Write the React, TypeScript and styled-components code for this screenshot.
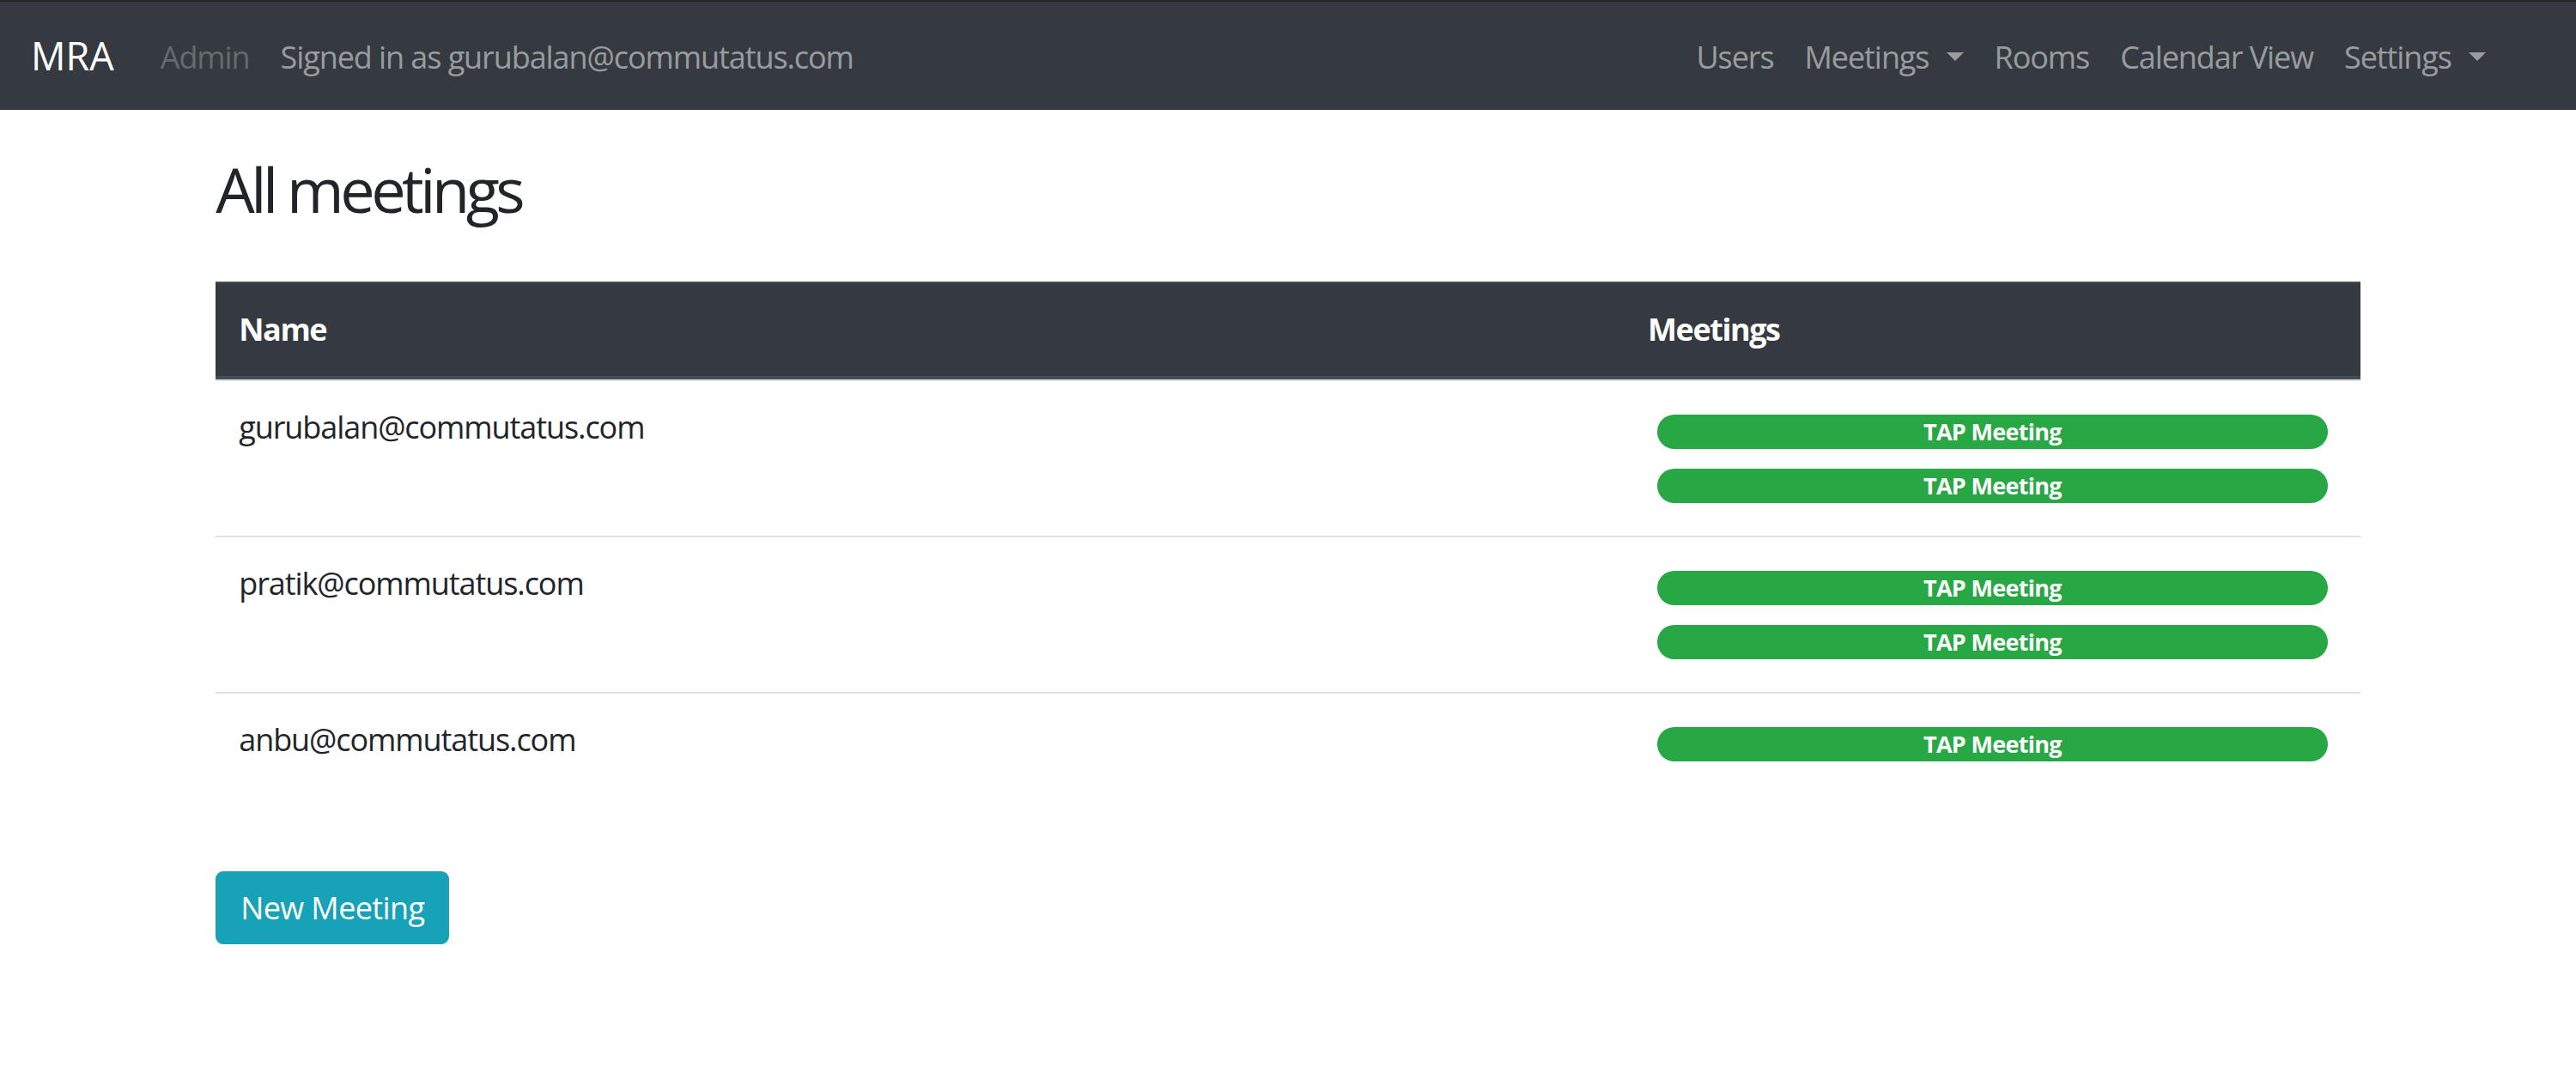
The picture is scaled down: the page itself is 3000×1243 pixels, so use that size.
import React from "react";
import styled, { createGlobalStyle } from "styled-components";

const GlobalStyle = createGlobalStyle`
  *, *::before, *::after { box-sizing: border-box; }
  html { font-size: 36px; }
  body {
    margin: 0;
    font-family: "Segoe UI", "Open Sans", "Noto Sans", sans-serif;
    font-size: 1rem;
    line-height: 1.5;
    letter-spacing: -0.03em;
    color: #212529;
    background: #fff;
  }
`;

const Navbar = styled.nav`
  display: flex;
  align-items: center;
  background: #343a40;
  border-top: 2px solid #232629;
  padding: 0.5rem 87px 0.5rem 1rem;
`;

const Brand = styled.a`
  font-size: 1.25rem;
  line-height: 1.5;
  letter-spacing: 0;
  padding: 0.3125rem 0;
  margin-right: 1rem;
  color: #fff;
  text-decoration: none;
  white-space: nowrap;
`;

const NavList = styled.ul<{ $right?: boolean }>`
  display: flex;
  align-items: center;
  list-style: none;
  margin: 0;
  padding: 0;
  margin-left: ${(p) => (p.$right ? "auto" : "0")};
`;

const NavLink = styled.a<{ $tone?: "muted" | "disabled"; $dropdown?: boolean }>`
  display: block;
  padding: 0.5rem;
  padding-top: calc(0.5rem + 2px);
  padding-bottom: calc(0.5rem - 2px);
  white-space: nowrap;
  text-decoration: none;
  color: ${(p) => (p.$tone === "disabled" ? "rgba(255,255,255,0.25)" : "rgba(255,255,255,0.5)")};
  &::after {
    content: ${(p) => (p.$dropdown ? '""' : "none")};
    display: inline-block;
    margin-left: 0.56em;
    vertical-align: 0.255em;
    border-top: 0.3em solid;
    border-right: 0.3em solid transparent;
    border-left: 0.3em solid transparent;
    border-bottom: 0;
  }
`;

const Container = styled.main`
  max-width: 2565px;
  margin: 0 auto;
  padding: 0 33.75px;
`;

const Title = styled.h2`
  font-size: 2rem;
  font-weight: 400;
  letter-spacing: -0.062em;
  line-height: 1.2;
  margin: 49px 0 65px;
`;

const Table = styled.table`
  width: 100%;
  border-collapse: separate;
  border-spacing: 0;
  margin-bottom: 1rem;
`;

const HeadCell = styled.th<{ $w?: string }>`
  width: ${(p) => p.$w || "auto"};
  text-align: left;
  vertical-align: bottom;
  font-weight: 700;
  letter-spacing: -0.04em;
  color: #fff;
  background: #343a40;
  padding: 0.75rem;
  border-top: 2px solid #454d55;
  border-bottom: 4px solid #454d55;
`;

const Cell = styled.td`
  vertical-align: top;
  padding: 0.75rem;
  border-top: 2px solid #dee2e6;
`;

const BadgeStack = styled.div`
  display: flex;
  flex-direction: column;
`;

const Badge = styled.span`
  display: block;
  margin: 0.3125rem;
  padding: 0.25em 0.6em;
  font-size: 75%;
  font-weight: 700;
  letter-spacing: -0.026em;
  line-height: 1;
  text-align: center;
  white-space: nowrap;
  color: #fff;
  background: #28a745;
  border-radius: 10rem;
`;

const Button = styled.button`
  display: inline-block;
  margin-top: 1.5rem;
  font-family: inherit;
  font-size: 1rem;
  letter-spacing: -0.017em;
  line-height: 1.5;
  padding: 0.375rem 0.75rem;
  color: #fff;
  background: #17a2b8;
  border: 2px solid #17a2b8;
  border-radius: 0.25rem;
  cursor: pointer;
`;

const rows = [
  { name: "gurubalan@commutatus.com", meetings: ["TAP Meeting", "TAP Meeting"] },
  { name: "pratik@commutatus.com", meetings: ["TAP Meeting", "TAP Meeting"] },
  { name: "anbu@commutatus.com", meetings: ["TAP Meeting"] },
];

export default function App() {
  return (
    <>
      <GlobalStyle />
      <Navbar>
        <Brand href="#">MRA</Brand>
        <NavList>
          <li><NavLink $tone="disabled">Admin</NavLink></li>
          <li><NavLink>Signed in as gurubalan@commutatus.com</NavLink></li>
        </NavList>
        <NavList $right>
          <li><NavLink href="#">Users</NavLink></li>
          <li><NavLink href="#" $dropdown>Meetings</NavLink></li>
          <li><NavLink href="#">Rooms</NavLink></li>
          <li><NavLink href="#">Calendar View</NavLink></li>
          <li><NavLink href="#" $dropdown>Settings</NavLink></li>
        </NavList>
      </Navbar>
      <Container>
        <Title>All meetings</Title>
        <Table>
          <thead>
            <tr>
              <HeadCell $w="65.7%">Name</HeadCell>
              <HeadCell>Meetings</HeadCell>
            </tr>
          </thead>
          <tbody>
            {rows.map((r) => (
              <tr key={r.name}>
                <Cell>{r.name}</Cell>
                <Cell>
                  <BadgeStack>
                    {r.meetings.map((m, i) => (
                      <Badge key={i}>{m}</Badge>
                    ))}
                  </BadgeStack>
                </Cell>
              </tr>
            ))}
          </tbody>
        </Table>
        <Button>New Meeting</Button>
      </Container>
    </>
  );
}
